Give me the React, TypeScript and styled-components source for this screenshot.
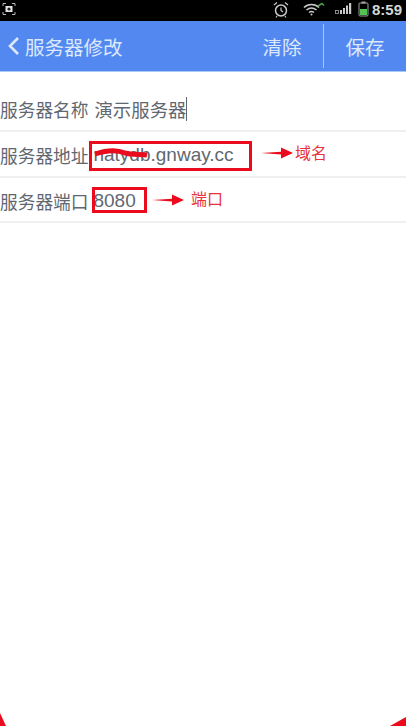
import React from "react";
import styled, { createGlobalStyle } from "styled-components";

const FONT = `"Liberation Sans", "Noto Sans CJK SC", sans-serif`;
const CN = `"Noto Sans CJK SC", sans-serif`;

const GlobalStyle = createGlobalStyle`
    html, body {
        margin: 0;
        padding: 0;
        background: #FFFFFF;
    }
    * {
        box-sizing: border-box;
    }
`;

const Page = styled.div`
    position: relative;
    width: 406px;
    height: 726px;
    overflow: hidden;
    display: flex;
    flex-direction: column;
    background: #FFFFFF;
    font-family: ${FONT};
`;

const StatusBar = styled.div`
    height: 21px;
    flex: none;
    display: flex;
    align-items: center;
    justify-content: space-between;
    padding: 0 4px 3px 2px;
    background: #000000;
`;

const StatusIcons = styled.div`
    display: flex;
    align-items: center;
`;

const Clock = styled.span`
    margin-left: 3px;
    font-size: 15px;
    font-weight: 700;
    color: #D4D8D4;
`;

const Header = styled.header`
    height: 51px;
    flex: none;
    display: flex;
    align-items: center;
    background: #5488F1;
    border-bottom: 1px solid #A9C8F5;
`;

const BackTitle = styled.div`
    flex: 1;
    display: flex;
    align-items: center;
    gap: 5px;
    padding-left: 7px;
    font-family: ${CN};
    font-size: 19.5px;
    color: #DCE8FB;
`;

const HeaderAction = styled.div`
    width: 82px;
    height: 100%;
    display: flex;
    align-items: center;
    justify-content: center;
    font-family: ${CN};
    font-size: 19.5px;
    color: #DCE8FB;
`;

const Divider = styled.div`
    width: 1px;
    height: 44px;
    background: #A9C8F5;
`;

const Row = styled.div<{ $h: number; $top: number }>`
    height: ${(p) => p.$h}px;
    display: flex;
    align-items: center;
    padding-top: ${(p) => p.$top}px;
    border-bottom: 2px solid #EFEFEF;
    color: #5F6770;
`;

const Label = styled.span`
    font-family: ${CN};
    font-size: 17.7px;
    white-space: nowrap;
`;

const Value = styled.span`
    margin-left: 5px;
    font-size: 19px;
    white-space: nowrap;
`;

const CnValue = styled(Value)`
    margin-left: 6px;
    font-family: ${CN};
    font-size: 18.4px;
`;

const Caret = styled.span`
    width: 1px;
    height: 24px;
    background: #5F6770;
`;

/* the red marks are drawn on top of the screenshot */
const MarkBox = styled.div<{ $x: number; $y: number; $w: number; $h: number }>`
    position: absolute;
    left: ${(p) => p.$x}px;
    top: ${(p) => p.$y}px;
    width: ${(p) => p.$w}px;
    height: ${(p) => p.$h}px;
    border: 3px solid #EA0B1C;
`;

const Scribble = styled.svg`
    position: absolute;
    left: 92px;
    top: 148px;
`;

const ArrowMark = styled.svg<{ $x: number; $y: number }>`
    position: absolute;
    left: ${(p) => p.$x}px;
    top: ${(p) => p.$y}px;
`;

const Note = styled.span<{ $x: number; $y: number }>`
    position: absolute;
    left: ${(p) => p.$x}px;
    top: ${(p) => p.$y}px;
    font-family: "Noto Sans CJK SC", sans-serif;
    font-size: 16px;
    line-height: 20px;
    color: #E8323C;
`;

const Corner = styled.svg<{ $right?: boolean }>`
    position: absolute;
    bottom: 0;
    ${(p) => (p.$right ? "right: 0;" : "left: 0;")}
`;

function Arrow({ x, y }: { x: number; y: number }) {
    return (
        <ArrowMark $x={x} $y={y} width="32" height="14" viewBox="0 0 32 14">
            <path d="M0 7 L20 5.8 L20 1.5 L32 7 L20 12.5 L20 8.4 Z" fill="#EA0B1C" />
        </ArrowMark>
    );
}

export default function App() {
    return (
        <Page>
            <GlobalStyle />
            <StatusBar>
                <svg width="14" height="14" viewBox="0 0 14 14" fill="none" stroke="#B8B8B8" strokeWidth="1">
                    <path d="M1 4V1.5H4M10 1.5H13V4M13 10V12.5H10M4 12.5H1V10" />
                    <rect x="3.5" y="4" width="7" height="6" fill="#E4E4E4" stroke="none" />
                    <circle cx="7" cy="7" r="1.6" fill="#222222" stroke="none" />
                </svg>
                <StatusIcons>
                    <svg width="18" height="17" viewBox="0 0 18 17" fill="none" stroke="#C9C9C9" strokeWidth="1.5">
                        <circle cx="9" cy="9.5" r="5.5" />
                        <path d="M9 6.5V9.5L11 11M2 4L5 1.5M16 4L13 1.5M5 15L4 16.5M13 15L14 16.5" strokeWidth="1.2" />
                    </svg>
                    <svg width="22" height="14" viewBox="0 0 22 14" style={{ marginLeft: 13 }} fill="none" stroke="#C9C9C9" strokeWidth="1.5">
                        <path d="M1 5.5C5 1.5 12 1.5 16 5.5M3.5 8C6.5 5.5 10.5 5.5 13.5 8M6 10.5C7.5 9.3 9.5 9.3 11 10.5" />
                        <circle cx="8.5" cy="12.5" r="1" fill="#C9C9C9" stroke="none" />
                        <path d="M15 4L19 1.5L21 3.5" stroke="#4E9A4E" />
                    </svg>
                    <svg width="20" height="14" viewBox="0 0 20 14" style={{ marginLeft: 10 }}>
                        <rect x="0.5" y="8.5" width="3" height="3" fill="none" stroke="#A8A8A8" strokeWidth="0.8" />
                        <rect x="5" y="8" width="2" height="4" fill="#C9C9C9" />
                        <rect x="8" y="6" width="2" height="6" fill="#C9C9C9" />
                        <rect x="11" y="3.5" width="2" height="8.5" fill="#C9C9C9" />
                        <rect x="14" y="1" width="2.2" height="11" fill="#C9C9C9" />
                    </svg>
                    <svg width="11" height="16" viewBox="0 0 11 16" style={{ marginLeft: 3 }}>
                        <rect x="3.5" y="0.5" width="4" height="2" fill="#A0A0A0" />
                        <rect x="1" y="2" width="9" height="13" rx="1" fill="none" stroke="#A0A0A0" />
                        <rect x="2" y="8" width="7" height="6" fill="#52C452" />
                    </svg>
                    <Clock>8:59</Clock>
                </StatusIcons>
            </StatusBar>
            <Header>
                <BackTitle>
                    <svg width="13" height="20" viewBox="0 0 13 20" fill="none" stroke="#DCE8FB" strokeWidth="2.6">
                        <path d="M11 2L3 10L11 18" />
                    </svg>
                    服务器修改
                </BackTitle>
                <HeaderAction>清除</HeaderAction>
                <Divider />
                <HeaderAction>保存</HeaderAction>
            </Header>
            <Row $h={60} $top={16}>
                <Label>服务器名称</Label>
                <CnValue>演示服务器</CnValue>
                <Caret />
            </Row>
            <Row $h={46} $top={1}>
                <Label>服务器地址</Label>
                <Value>natydb.gnway.cc</Value>
            </Row>
            <Row $h={45} $top={2}>
                <Label>服务器端口</Label>
                <Value>8080</Value>
            </Row>

            <MarkBox $x={89} $y={141} $w={163} $h={30} />
            <MarkBox $x={92} $y={187} $w={55} $h={26} />
            <Scribble width="58" height="10" viewBox="0 0 58 10" fill="none" stroke="#EA0B1C" strokeWidth="5">
                <path d="M3 6C15 2 26 2 33 5C40 7 48 6 55 7" />
            </Scribble>
            <Arrow x={261} y={146} />
            <Arrow x={152} y={193} />
            <Note $x={295} $y={142}>域名</Note>
            <Note $x={191} $y={188}>端口</Note>

            <Corner width="6" height="13" viewBox="0 0 6 13">
                <path d="M0 0L6 13H0Z" fill="#EA0B1C" />
            </Corner>
            <Corner $right width="16" height="9" viewBox="0 0 16 9">
                <path d="M0 9L16 0V9Z" fill="#EA0B1C" />
            </Corner>
        </Page>
    );
}
